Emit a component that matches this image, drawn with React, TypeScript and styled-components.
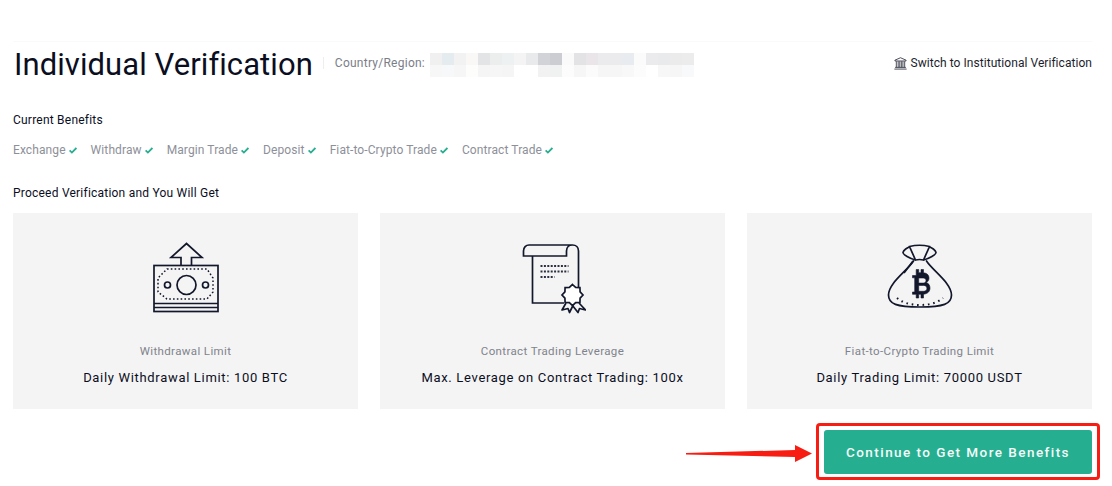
import React from "react";
import styled, { createGlobalStyle } from "styled-components";

const Global = createGlobalStyle`
  html, body { margin: 0; padding: 0; background: #fff; }
  body { font-family: Roboto, "Liberation Sans", sans-serif; }
`;

const Page = styled.div`
  width: 1112px;
  height: 486px;
  box-sizing: border-box;
  padding: 41px 20px 0 13px;
  overflow: hidden;
`;

const Header = styled.header`
  display: flex;
  align-items: center;
  height: 45px;
  border-top: 1px solid #fafafa;
`;

const Title = styled.h1`
  margin: 0 0 0 1px;
  font-size: 31px;
  font-weight: 400;
  line-height: 45px;
  letter-spacing: 0.07px;
  color: #0b0e1e;
  white-space: nowrap;
`;

const Region = styled.div`
  display: flex;
  align-items: center;
  margin: 0 0 3px 10px;
  padding-left: 11px;
  border-left: 1px solid #eeeeee;
  height: 12px;
  font-size: 12px;
  letter-spacing: 0.25px;
  color: #7b7e88;
  white-space: nowrap;
`;

const Mosaic = styled.div`
  display: grid;
  grid-template-columns: repeat(22, 12px);
  grid-auto-rows: 12px;
  margin: 3px 0 0 5px;
  filter: blur(0.3px);
`;

const Patch = styled.span<{ $c: string }>`
  background: ${(p) => p.$c};
`;

const Switch = styled.a`
  display: flex;
  align-items: center;
  gap: 4px;
  margin: 0 0 3px auto;
  font-size: 12px;
  letter-spacing: 0.05px;
  color: #1b1e2c;
  white-space: nowrap;
`;

const SectionTitle = styled.h2<{ $top: number }>`
  margin: ${(p) => p.$top}px 0 0;
  font-size: 12px;
  font-weight: 400;
  line-height: 16px;
  letter-spacing: 0.22px;
  color: #0b0e1e;
`;

const BenefitRow = styled.ul`
  display: flex;
  gap: 14px;
  list-style: none;
  margin: 14px 0 0;
  padding: 0;
`;

const Benefit = styled.li`
  display: flex;
  align-items: center;
  gap: 3px;
  font-size: 12px;
  line-height: 16px;
  letter-spacing: 0.1px;
  color: #8d9099;
  white-space: nowrap;
`;

const Cards = styled.div`
  display: grid;
  grid-template-columns: repeat(3, 345px);
  column-gap: 22px;
  margin-top: 12px;
`;

const Card = styled.section`
  display: flex;
  flex-direction: column;
  align-items: center;
  height: 196px;
  background: #f4f4f4;
`;

const IconSlot = styled.div`
  height: 75px;
  margin-top: 28px;
`;

const CardLabel = styled.div`
  margin-top: 27px;
  font-size: 11.5px;
  line-height: 16px;
  letter-spacing: 0.37px;
  color: #80838c;
`;

const CardValue = styled.div`
  margin-top: 10px;
  font-size: 13px;
  line-height: 18px;
  letter-spacing: 0.68px;
  color: #0b0e1e;
`;

const Footer = styled.div`
  position: relative;
  display: flex;
  justify-content: flex-end;
  margin-top: 21px;
`;

const PrimaryButton = styled.button`
  width: 268px;
  height: 44px;
  border: 0;
  border-radius: 3px;
  background: #26ae90;
  color: #f4fbf9;
  font-family: Roboto, "Liberation Sans", sans-serif;
  font-size: 13.5px;
  font-weight: 500;
  letter-spacing: 1.45px;
`;

const Highlight = styled.div`
  position: absolute;
  right: -8px;
  top: -7px;
  width: 284px;
  height: 57px;
  box-sizing: border-box;
  border: 3px solid #f81d12;
  border-radius: 4px;
  pointer-events: none;
`;

const Arrow = styled.svg`
  position: absolute;
  left: 673px;
  top: 12px;
`;

const Check = () => (
  <svg width="8" height="7" viewBox="0 0 8 7" fill="none" aria-hidden="true">
    <path d="M.6 3.400l2.300 2.200L7.400 1" stroke="#26ae90" strokeWidth="1.800" />
  </svg>
);

const Bank = () => (
  <svg width="13" height="13" viewBox="0 0 14 14" fill="none" stroke="#2a2d3a" strokeWidth="0.9" aria-hidden="true">
    <path d="M7 .8L1 3.400v.9h12v-.9L7 .8z" />
    <path d="M2.500 4.600v6.500M4.500 4.600v6.500M6.200 4.600v6.500M7.900 4.600v6.500M9.600 4.600v6.500M11.500 4.600v6.500M1.200 11.200h11.600M.4 13h13.200" />
  </svg>
);

const MoneyIcon = () => (
  <svg width="66" height="75" viewBox="0 0 66 75" fill="none" stroke="#12172b" strokeWidth="1.700">
    <path d="M28 24.500V16.500H18L33.500 2.500 49 16.500H38.500v8" />
    <rect x="1" y="24.500" width="64" height="46" />
    <path d="M1 62.500h64M1 66.500h64" />
    <circle cx="33.500" cy="44" r="9.500" />
    <circle cx="14.500" cy="44" r="3" />
    <circle cx="52.500" cy="44" r="3" />
    <path
      d="M14 28h40l6 9v14l-6 7H14l-9-7V37z"
      strokeDasharray="1.600 2.200"
      strokeWidth="1.500"
    />
  </svg>
);

const sealPoints = Array.from({ length: 16 }, (_, i) => {
  const a = (i * Math.PI) / 8;
  const r = i % 2 === 0 ? 10.5 : 8.2;
  return `${(52.5 + r * Math.sin(a)).toFixed(2)},${(54 - r * Math.cos(a)).toFixed(2)}`;
}).join(" ");

const ScrollIcon = () => (
  <svg width="66" height="75" viewBox="0 0 66 75" fill="none" stroke="#12172b" strokeWidth="1.700">
    <path d="M12.500 15V62H44" />
    <path d="M58.500 46V10c0-3.500-2.500-6-6-6H9c-3 0-5.500 2.500-5.500 6v5h43v-5c0-3.500 2.500-6 6-6" />
    <path d="M20.500 25h28M20.500 30.500h28M20.500 36h14" strokeDasharray="2 1.400" strokeWidth="2" stroke="#2a2f42" />
    <polygon points={sealPoints} fill="#fff" />
    <path d="M46 62l-4 7 6-1.500 1.500 4 3.500-7" strokeLinejoin="round" />
    <path d="M59 62l6.500 7-6-1.500-1.500 4-5.500-7" strokeLinejoin="round" />
  </svg>
);

const BagIcon = () => (
  <svg width="66" height="75" viewBox="0 0 66 75" fill="none" stroke="#12172b" strokeWidth="1.700">
    <path d="M22.500 5.500c6-1.500 14-1.500 20 0l-6 13.500c-2-.5-6-.5-8 0z" />
    <path d="M22.500 6c-2 .5-6 3-6.500 5.500-.3 2 7 6 12.500 7.500" />
    <path d="M42.500 6c2 .5 6 3 6.500 5.500.3 2-7 6-12.500 7.500" />
    <path d="M26.500 20C20 30 1.500 42 1.500 54c0 9 8 12 31.500 12s31.500-3 31.500-12c0-12-18.500-24-25-34" strokeLinecap="round" />
    <path d="M26 20l-9 12" />
    <path d="M10 57c6 5 14 7 23 7s17-2 23-7" strokeDasharray="1.600 3.800" strokeWidth="2" />
    <path
      transform="translate(3 4.500)"
      d="M26.200 26.500v3.500h-3.700v2.300h2.200v14.200h-2.200v2.300h3.700v3.700h2.500v-3.700h2.300v3.700h2.500v-3.800c4-.4 6.500-2.500 6.500-6.200 0-3-1.600-4.800-3.800-5.400 1.700-.8 2.800-2.400 2.800-4.600 0-3-2.200-4.900-5.500-5.200v-3.300h-2.500v3.200H28.700v-3.200h-2.500zm2.500 6h4.500c1.700 0 2.800 1 2.800 2.500s-1.100 2.600-2.800 2.600h-4.500v-5.100zm0 7.400h5c2 0 3.200 1.100 3.200 2.900s-1.200 3-3.200 3h-5v-5.900z"
      fill="#12172b"
      stroke="#12172b"
      strokeWidth="0.600"
    />
  </svg>
);

const patches = [
  "#f0f0f0","#e4ecef","#f2f2f2","#f9f8f6","#e3e4e6","#eceeed","#edf1f2","#f4f4f4","#e9eaec","#d2d3d8","#cccdd3",
  "#fafafa","#e3e3e5","#e9e5e9","#ebebed","#ebebee","#e8ecf0","#fbfbfb","#ebebee","#e9eaec","#ebebec","#ececec",
  "#f7f7f7","#f6f8fa","#f6f6f6","#fdfdfc","#f5f5f5","#f6f6f6","#f5f5f5","#ffffff","#ffffff","#f2f2f2","#f0f2f2",
  "#fcfcfc","#f6f6f6","#fbfbfb","#f6f6f6","#f6f6f6","#f8f8f8","#fcfcfc","#ffffff","#f7f7f7","#f6f6f6","#f8f9fa",
];

const benefits = ["Exchange", "Withdraw", "Margin Trade", "Deposit", "Fiat-to-Crypto Trade", "Contract Trade"];

const cards = [
  { icon: <MoneyIcon />, label: "Withdrawal Limit", value: "Daily Withdrawal Limit: 100 BTC" },
  { icon: <ScrollIcon />, label: "Contract Trading Leverage", value: "Max. Leverage on Contract Trading: 100x" },
  { icon: <BagIcon />, label: "Fiat-to-Crypto Trading Limit", value: "Daily Trading Limit: 70000 USDT" },
];

export default function App() {
  return (
    <Page>
      <Global />
      <Header>
        <Title>Individual Verification</Title>
        <Region>
          Country/Region:
          <Mosaic aria-hidden="true">
            {patches.map((c, i) => (
              <Patch key={i} $c={c} />
            ))}
          </Mosaic>
        </Region>
        <Switch>
          <Bank />
          Switch to Institutional Verification
        </Switch>
      </Header>
      <SectionTitle $top={25}>Current Benefits</SectionTitle>
      <BenefitRow>
        {benefits.map((b) => (
          <Benefit key={b}>
            {b}
            <Check />
          </Benefit>
        ))}
      </BenefitRow>
      <SectionTitle $top={27}>Proceed Verification and You Will Get</SectionTitle>
      <Cards>
        {cards.map((c) => (
          <Card key={c.label}>
            <IconSlot>{c.icon}</IconSlot>
            <CardLabel>{c.label}</CardLabel>
            <CardValue>{c.value}</CardValue>
          </Card>
        ))}
      </Cards>
      <Footer>
        <Arrow width="128" height="24" viewBox="0 0 128 24">
          <path d="M0 11L109 8V3l17 8.500L109 20v-5L0 12.500z" fill="#f81d12" />
        </Arrow>
        <PrimaryButton>Continue to Get More Benefits</PrimaryButton>
        <Highlight />
      </Footer>
    </Page>
  );
}
